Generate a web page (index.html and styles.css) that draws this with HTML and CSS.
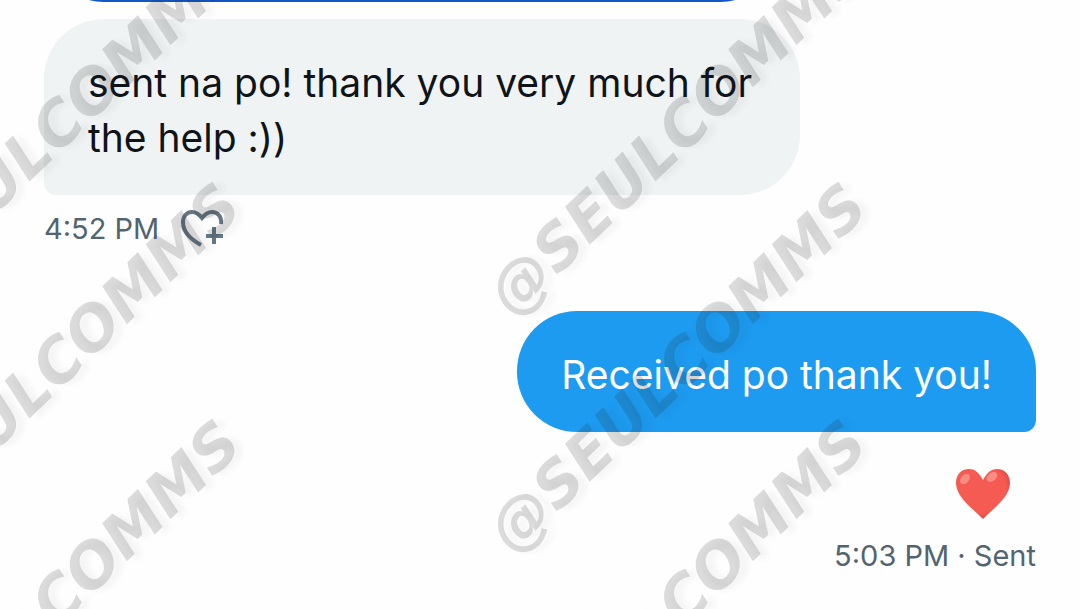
FILE: index.html
```html
<!DOCTYPE html>
<html lang="en">

<head>
  <meta charset="UTF-8" />
  <meta name="viewport" content="width=device-width, initial-scale=1.0" />
  <title>Messages</title>
  <link rel="stylesheet" href="styles.css">
</head>

<body>
  <main class="chat">
    <div class="message received">
      <div class="bubble attachment"></div>
    </div>

    <div class="message received">
      <p class="bubble">sent na po! thank you very much for the help :))</p>
      <div class="meta">
        <time>4:52 PM</time>
        <button class="react" type="button" aria-label="Add reaction">
          <svg viewBox="0 0 44 40" width="44" height="40">
            <path d="M40 15 C41 7 36 3 31 3 C27 3 24 5 21 9 C18 5 15 3 11 3 C6 3 2 7 2 13 C2 22 9 30 20 36" />
            <path d="M33 18v17M25 27h17" />
          </svg>
        </button>
      </div>
    </div>

    <div class="message sent">
      <p class="bubble">Received po thank you!</p>
      <svg class="heart" viewBox="0 0 56 52" width="56" height="52" role="img" aria-label="Heart">
        <defs>
          <radialGradient id="heartFill" cx="0.45" cy="0.4" r="0.62">
            <stop offset="0.75" stop-color="#f55b53" />
            <stop offset="1" stop-color="#d94a45" />
          </radialGradient>
        </defs>
        <path fill="url(#heartFill)" d="M28 12 C24 4 19 1 14 1 C6 1 1 7 1 15 C1 29 17 40 28 51 C39 40 55 29 55 15 C55 7 50 1 42 1 C37 1 32 4 28 12Z" />
        <ellipse cx="10" cy="11" rx="6" ry="4" fill="#f98d84" transform="rotate(-50 10 11)" />
        <ellipse cx="37" cy="9" rx="6" ry="4" fill="#f98d84" transform="rotate(-40 37 9)" />
      </svg>
      <p class="meta"><time>5:03 PM</time> · Sent</p>
    </div>
  </main>

  <div class="watermark" aria-hidden="true">
    <span>@SEULCOMMS</span>
    <span>@SEULCOMMS</span>
    <span>@SEULCOMMS</span>
    <span>@SEULCOMMS</span>
    <span>@SEULCOMMS</span>
    <span>@SEULCOMMS</span>
  </div>
</body>

</html>
```

FILE: styles.css
```css
:root {
  --color-received: #eff3f4;
  --color-sent: #1d9bf0;
  --color-link: #1256c8;
  --color-text: #0f1419;
  --color-muted: #536471;
  --radius: 60px;
  --radius-tail: 12px;
}

* {
  box-sizing: border-box;
}

body {
  margin: 0;
  position: relative;
  height: 100vh;
  overflow: hidden;
  font-family: Inter, Roboto, sans-serif;
  background-color: #fefefe;
  color: var(--color-text);
}

/* the list sits at its newest message */
.chat {
  display: flex;
  flex-direction: column;
  justify-content: flex-end;
  height: 100%;
  padding: 0 44px 33px;
}

.message {
  display: flex;
  flex-direction: column;
  flex-shrink: 0;
  align-items: flex-start;
}

.message.sent {
  align-items: flex-end;
  margin-top: 62px;
}

.bubble {
  max-width: 756px;
  margin: 0;
  padding: 36px 44px 30px;
  border-radius: var(--radius);
  border-bottom-left-radius: var(--radius-tail);
  background-color: var(--color-received);
  font-size: 39px;
  line-height: 55px;
}

.sent .bubble {
  border-radius: var(--radius);
  border-bottom-right-radius: var(--radius-tail);
  background-color: var(--color-sent);
  color: #fff;
}

.bubble.attachment {
  width: 736px;
  height: 120px;
  margin-bottom: 17px;
  border-radius: var(--radius);
  background-color: var(--color-link);
}

.meta {
  margin: 0;
  color: var(--color-muted);
  font-size: 29px;
  line-height: 40px;
}

.received .meta {
  display: flex;
  align-items: center;
  gap: 22px;
  margin-top: 14px;
}

.react {
  display: flex;
  padding: 0;
  border: none;
  background: none;
  color: #657786;
  cursor: pointer;
}

.react path {
  fill: none;
  stroke: currentColor;
  stroke-width: 4;
}

.heart {
  margin: 36px 25px 16px 0;
}

/* tiled handle over the whole conversation */
.watermark {
  position: absolute;
  top: 12px;
  left: -262px;
  display: grid;
  grid-template-columns: 626px 626px;
  grid-auto-rows: 237px;
  place-items: center;
  pointer-events: none;
}

.watermark span {
  transform: rotate(-44deg);
  color: rgba(40, 40, 40, 0.16);
  font-family: "DejaVu Sans", sans-serif;
  font-size: 61px;
  font-style: italic;
  font-weight: 700;
  line-height: 64px;
  text-shadow: 6px 6px 6px rgba(0, 0, 0, 0.04);
}
```
